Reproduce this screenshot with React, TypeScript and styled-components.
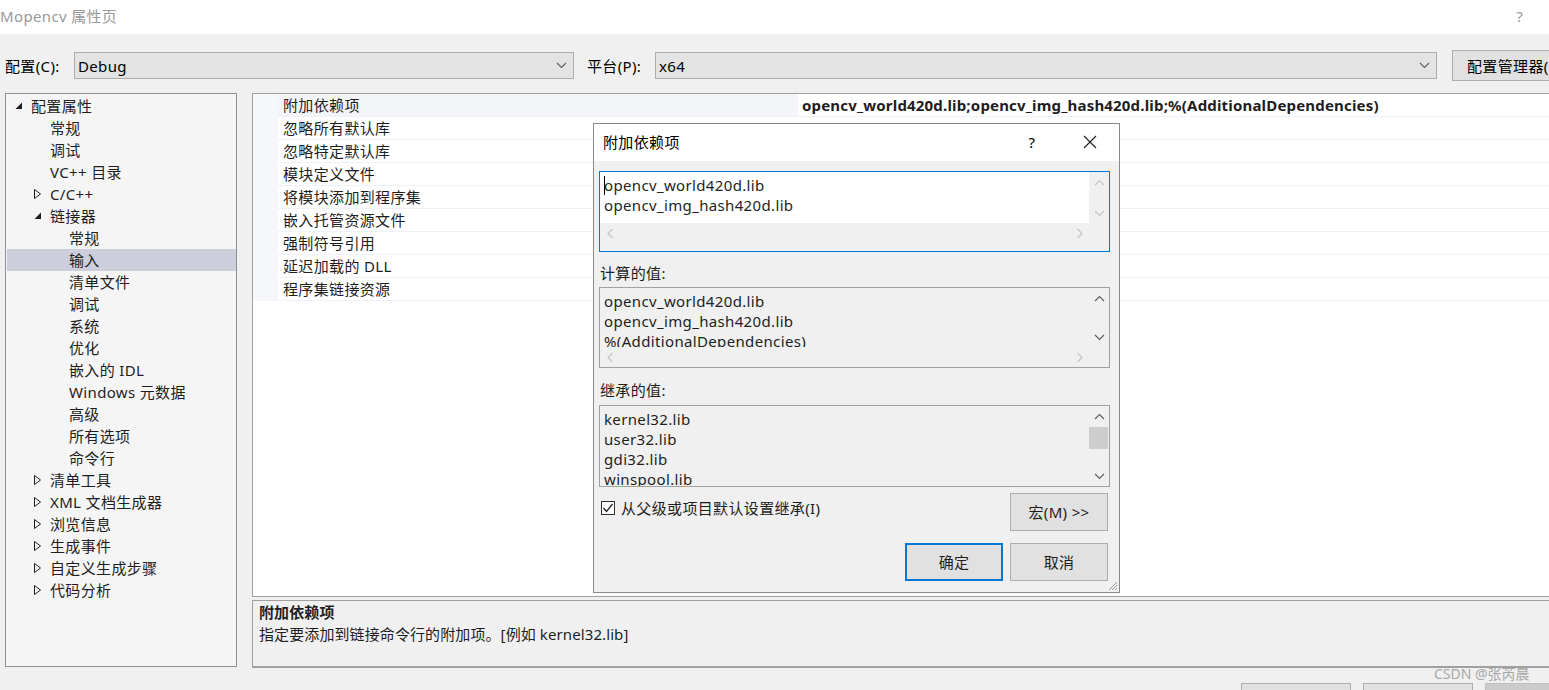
import React from "react";
import styled, { createGlobalStyle } from "styled-components";

const FONT = `"Noto Sans", "Noto Sans CJK SC", sans-serif`;

const GlobalStyle = createGlobalStyle`
  html, body { margin: 0; padding: 0; background: #f0f0f0; }
  body { font-family: ${FONT}; font-size: 15px; color: #000; letter-spacing: 0.35px; }
  * { box-sizing: border-box; }
`;

const Page = styled.div`
  position: relative;
  width: 1549px;
  height: 690px;
  overflow: hidden;
  background: #f0f0f0;
  display: flex;
  flex-direction: column;
`;

const TitleBar = styled.div`
  height: 34px;
  flex: none;
  background: #fff;
  display: flex;
  align-items: center;
  justify-content: space-between;
  padding: 0 26px 2px 0;
  color: #999;
  line-height: 20px;
`;

const Toolbar = styled.div`
  height: 59px;
  flex: none;
  display: flex;
  align-items: center;
  padding: 4px 0 0 5px;
  line-height: 20px;
`;

const ToolLabel = styled.span<{ $w: number }>`
  width: ${(p) => p.$w}px;
  flex: none;
  white-space: nowrap;
`;

const Combo = styled.div<{ $w: number }>`
  height: 27px;
  width: ${(p) => p.$w}px;
  flex: none;
  background: #e3e3e3;
  border: 1px solid #adadad;
  display: flex;
  align-items: center;
  justify-content: space-between;
  padding: 0 6px 0 3px;
`;

const ToolButton = styled.div`
  height: 31px;
  width: 130px;
  flex: none;
  margin-left: 15px;
  background: #e1e1e1;
  border: 1px solid #adadad;
  display: flex;
  align-items: center;
  padding-left: 14px;
  white-space: nowrap;
`;

const Main = styled.div`
  height: 575px;
  flex: none;
  display: flex;
  gap: 15px;
  padding-left: 5px;
`;

const Tree = styled.div`
  width: 232px;
  height: 574px;
  flex: none;
  background: #f5f5f5;
  border: 1px solid #8e8f96;
  padding: 1px 0 0 1px;
  line-height: 22px;
`;

const TreeRow = styled.div<{ $level: number; $selected?: boolean }>`
  height: 22px;
  display: flex;
  align-items: center;
  padding-left: ${(p) => 8 + p.$level * 19}px;
  background: ${(p) => (p.$selected ? "#cccedb" : "transparent")};
  color: #1e1e1e;
  white-space: nowrap;
`;

const Expander = styled.span`
  width: 16px;
  flex: none;
  display: flex;
  align-items: center;
`;

const RightCol = styled.div`
  flex: 1;
  display: flex;
  flex-direction: column;
  gap: 3px;
  margin-right: -3px;
`;

const Grid = styled.div`
  height: 504px;
  flex: none;
  background: #fff;
  border: 1px solid #a0a0a0;
  overflow: hidden;
`;

const GridRow = styled.div`
  height: 23px;
  display: grid;
  grid-template-columns: 25px 520px 1fr;
  line-height: 22px;
`;

const Gutter = styled.div`
  background: #f5f7fa;
`;

const NameCell = styled.div<{ $selected?: boolean }>`
  padding-left: 5px;
  border-bottom: 1px solid #eef1f6;
  background: ${(p) => (p.$selected ? "#f3f5f9" : "#fff")};
  color: #1e1e1e;
  white-space: nowrap;
`;

const ValueCell = styled.div`
  padding-left: 4px;
  border-bottom: 1px solid #eef1f6;
  font-weight: 700;
  letter-spacing: 0.18px;
  white-space: nowrap;
  color: #1e1e1e;
`;

const Description = styled.div`
  height: 68px;
  flex: none;
  background: #f0f0f0;
  border-top: 1px solid #a0a0a0;
  border-left: 1px solid #a0a0a0;
  border-bottom: 2px solid #a0a0a0;
  padding-left: 6px;
  line-height: 22px;
  letter-spacing: 0.1px;
  color: #1e1e1e;
`;

const DescTitle = styled.div`
  font-weight: 700;
`;

const Footer = styled.div`
  display: flex;
  justify-content: flex-end;
  gap: 12px;
  padding-top: 15px;
  margin-right: -46px;
`;

const FooterButton = styled.div<{ $disabled?: boolean }>`
  width: 110px;
  height: 30px;
  background: ${(p) => (p.$disabled ? "#cccccc" : "#e1e1e1")};
  border: 1px solid ${(p) => (p.$disabled ? "#bfbfbf" : "#adadad")};
`;

const Watermark = styled.div`
  position: absolute;
  left: 1434px;
  top: 664px;
  font-size: 14px;
  line-height: 20px;
  letter-spacing: 0;
  color: #a8a8a8;
  white-space: nowrap;
`;

/* ---------- dialog ---------- */

const Dialog = styled.div`
  position: absolute;
  left: 593px;
  top: 123px;
  width: 527px;
  height: 470px;
  background: #f0f0f0;
  border: 1px solid #8a8a8a;
  display: flex;
  flex-direction: column;
  line-height: 20px;
`;

const DialogTitle = styled.div`
  height: 37px;
  flex: none;
  background: #fff;
  display: flex;
  align-items: center;
  padding: 0 22px 1px 9px;
`;

const DialogTitleText = styled.span`
  flex: 1;
`;

const HelpGlyph = styled.span`
  width: 20px;
  text-align: center;
  margin-right: 41px;
`;

const DialogBody = styled.div`
  position: relative;
  flex: 1;
  display: flex;
  flex-direction: column;
  padding: 10px 9px 0 5px;
`;

const TextBox = styled.div<{ $focused?: boolean; $height: number }>`
  height: ${(p) => p.$height}px;
  flex: none;
  border: 1px solid ${(p) => (p.$focused ? "#0078d7" : "#a0a0a0")};
  background: #f0f0f0;
  display: grid;
  grid-template-columns: 1fr 20px;
  overflow: hidden;
`;

const TextArea = styled.div<{ $editable?: boolean }>`
  position: relative;
  background: ${(p) => (p.$editable ? "#fff" : "#f0f0f0")};
  padding: 3px 0 0 4px;
  overflow: hidden;
  white-space: pre;
  color: #1e1e1e;
`;

const Caret = styled.span`
  position: absolute;
  left: 4px;
  top: 4px;
  width: 1px;
  height: 19px;
  background: #000;
`;

const VScroll = styled.div`
  display: flex;
  flex-direction: column;
  align-items: center;
  background: #f0f0f0;
`;

const ArrowBtn = styled.div`
  width: 20px;
  height: 20px;
  flex: none;
  display: flex;
  align-items: center;
  justify-content: center;
`;

const VTrack = styled.div`
  flex: 1;
  width: 100%;
  padding: 1px 1px 0 0;
`;

const Thumb = styled.div`
  width: 19px;
  height: 22px;
  background: #cdcdcd;
`;

const HScroll = styled.div`
  grid-column: 1 / 3;
  height: 20px;
  display: flex;
  justify-content: space-between;
  padding-right: 20px;
  background: #f0f0f0;
`;

const FieldLabel = styled.div<{ $top: number; $bottom: number }>`
  margin: ${(p) => p.$top}px 0 ${(p) => p.$bottom}px 1px;
  color: #1e1e1e;
`;

const OptionRow = styled.div`
  display: flex;
  justify-content: space-between;
  align-items: flex-start;
  margin-top: 6px;
  padding-right: 2px;
`;

const CheckLabel = styled.label`
  display: flex;
  align-items: center;
  gap: 6px;
  padding: 5px 0 0 2px;
  color: #1e1e1e;
`;

const CheckBox = styled.span`
  width: 14px;
  height: 14px;
  border: 1px solid #333;
  background: #fff;
  display: flex;
  align-items: center;
  justify-content: center;
`;

const DlgButton = styled.div<{ $default?: boolean }>`
  width: 98px;
  height: 38px;
  flex: none;
  background: #e1e1e1;
  border: ${(p) => (p.$default ? "2px solid #0078d7" : "1px solid #adadad")};
  display: flex;
  align-items: center;
  justify-content: center;
  color: #1e1e1e;
`;

const ButtonRow = styled.div`
  display: flex;
  justify-content: flex-end;
  gap: 7px;
  margin-top: 12px;
  padding-right: 2px;
`;

const Grip = styled.svg`
  position: absolute;
  right: 1px;
  bottom: 1px;
`;

/* ---------- icons ---------- */

const Chevron = ({ dir, color = "#606060" }: { dir: "up" | "down" | "left" | "right"; color?: string }) => {
  const paths: Record<string, string> = {
    down: "M1 3 L5.5 7.5 L10 3",
    up: "M1 8 L5.5 3.5 L10 8",
    left: "M7.5 1 L3 5.5 L7.5 10",
    right: "M3.5 1 L8 5.5 L3.5 10",
  };
  return (
    <svg width="11" height="11" viewBox="0 0 11 11">
      <path d={paths[dir]} fill="none" stroke={color} strokeWidth="1.2" />
    </svg>
  );
};

const OpenTri = () => (
  <svg width="8" height="8" viewBox="0 0 8 8">
    <polygon points="7,0.5 7,7 0.5,7" fill="#1e1e1e" />
  </svg>
);

const ClosedTri = () => (
  <svg width="8" height="10" viewBox="0 0 8 10">
    <polygon points="0.5,0.5 6.5,5 0.5,9.5" fill="none" stroke="#1e1e1e" strokeWidth="1" />
  </svg>
);

const CloseIcon = () => (
  <svg width="14" height="14" viewBox="0 0 14 14">
    <path d="M1 1 L13 13 M13 1 L1 13" stroke="#1e1e1e" strokeWidth="1.1" />
  </svg>
);

const CheckMark = () => (
  <svg width="12" height="12" viewBox="0 0 12 12">
    <path d="M1.5 6 L4.5 9.5 L10.5 2" fill="none" stroke="#1e1e1e" strokeWidth="1.3" />
  </svg>
);

/* ---------- data ---------- */

type Node = { label: string; level: number; exp?: "open" | "closed"; selected?: boolean };

const treeNodes: Node[] = [
  { label: "配置属性", level: 0, exp: "open" },
  { label: "常规", level: 1 },
  { label: "调试", level: 1 },
  { label: "VC++ 目录", level: 1 },
  { label: "C/C++", level: 1, exp: "closed" },
  { label: "链接器", level: 1, exp: "open" },
  { label: "常规", level: 2 },
  { label: "输入", level: 2, selected: true },
  { label: "清单文件", level: 2 },
  { label: "调试", level: 2 },
  { label: "系统", level: 2 },
  { label: "优化", level: 2 },
  { label: "嵌入的 IDL", level: 2 },
  { label: "Windows 元数据", level: 2 },
  { label: "高级", level: 2 },
  { label: "所有选项", level: 2 },
  { label: "命令行", level: 2 },
  { label: "清单工具", level: 1, exp: "closed" },
  { label: "XML 文档生成器", level: 1, exp: "closed" },
  { label: "浏览信息", level: 1, exp: "closed" },
  { label: "生成事件", level: 1, exp: "closed" },
  { label: "自定义生成步骤", level: 1, exp: "closed" },
  { label: "代码分析", level: 1, exp: "closed" },
];

const gridRows: { name: string; value?: string }[] = [
  { name: "附加依赖项", value: "opencv_world420d.lib;opencv_img_hash420d.lib;%(AdditionalDependencies)" },
  { name: "忽略所有默认库" },
  { name: "忽略特定默认库" },
  { name: "模块定义文件" },
  { name: "将模块添加到程序集" },
  { name: "嵌入托管资源文件" },
  { name: "强制符号引用" },
  { name: "延迟加载的 DLL" },
  { name: "程序集链接资源" },
];

export default function App() {
  return (
    <>
      <GlobalStyle />
      <Page>
        <TitleBar>
          <span>Mopencv 属性页</span>
          <span>?</span>
        </TitleBar>

        <Toolbar>
          <ToolLabel $w={69}>配置(C):</ToolLabel>
          <Combo $w={500}>
            <span>Debug</span>
            <Chevron dir="down" />
          </Combo>
          <ToolLabel $w={13} />
          <ToolLabel $w={68}>平台(P):</ToolLabel>
          <Combo $w={782}>
            <span>x64</span>
            <Chevron dir="down" />
          </Combo>
          <ToolButton>配置管理器(O)...</ToolButton>
        </Toolbar>

        <Main>
          <Tree>
            {treeNodes.map((n, i) => (
              <TreeRow key={i} $level={n.level} $selected={n.selected}>
                <Expander>
                  {n.exp === "open" && <OpenTri />}
                  {n.exp === "closed" && <ClosedTri />}
                </Expander>
                {n.label}
              </TreeRow>
            ))}
          </Tree>

          <RightCol>
            <Grid>
              {gridRows.map((r, i) => (
                <GridRow key={i}>
                  <Gutter />
                  <NameCell $selected={i === 0}>{r.name}</NameCell>
                  <ValueCell>{r.value ?? ""}</ValueCell>
                </GridRow>
              ))}
            </Grid>
            <Description>
              <DescTitle>附加依赖项</DescTitle>
              <div>指定要添加到链接命令行的附加项。[例如 kernel32.lib]</div>
            </Description>
          </RightCol>
        </Main>

        <Footer>
          <FooterButton />
          <FooterButton />
          <FooterButton $disabled />
        </Footer>

        <Watermark>CSDN @张芮晨</Watermark>

        <Dialog>
          <DialogTitle>
            <DialogTitleText>附加依赖项</DialogTitleText>
            <HelpGlyph>?</HelpGlyph>
            <CloseIcon />
          </DialogTitle>
          <DialogBody>
            <TextBox $focused $height={81}>
              <TextArea $editable>
                <Caret />
                {"opencv_world420d.lib\nopencv_img_hash420d.lib"}
              </TextArea>
              <VScroll>
                <ArrowBtn><Chevron dir="up" color="#c4c4c4" /></ArrowBtn>
                <VTrack />
                <ArrowBtn><Chevron dir="down" color="#c4c4c4" /></ArrowBtn>
              </VScroll>
              <HScroll>
                <ArrowBtn><Chevron dir="left" color="#c4c4c4" /></ArrowBtn>
                <ArrowBtn><Chevron dir="right" color="#c4c4c4" /></ArrowBtn>
              </HScroll>
            </TextBox>

            <FieldLabel $top={11} $bottom={4}>计算的值:</FieldLabel>
            <TextBox $height={81}>
              <TextArea>
                {"opencv_world420d.lib\nopencv_img_hash420d.lib\n%(AdditionalDependencies)"}
              </TextArea>
              <VScroll>
                <ArrowBtn><Chevron dir="up" /></ArrowBtn>
                <VTrack />
                <ArrowBtn><Chevron dir="down" /></ArrowBtn>
              </VScroll>
              <HScroll>
                <ArrowBtn><Chevron dir="left" color="#c4c4c4" /></ArrowBtn>
                <ArrowBtn><Chevron dir="right" color="#c4c4c4" /></ArrowBtn>
              </HScroll>
            </TextBox>

            <FieldLabel $top={12} $bottom={5}>继承的值:</FieldLabel>
            <TextBox $height={82}>
              <TextArea>
                {"kernel32.lib\nuser32.lib\ngdi32.lib\nwinspool.lib"}
              </TextArea>
              <VScroll>
                <ArrowBtn><Chevron dir="up" /></ArrowBtn>
                <VTrack><Thumb /></VTrack>
                <ArrowBtn><Chevron dir="down" /></ArrowBtn>
              </VScroll>
            </TextBox>

            <OptionRow>
              <CheckLabel>
                <CheckBox><CheckMark /></CheckBox>
                从父级或项目默认设置继承(I)
              </CheckLabel>
              <DlgButton>宏(M) &gt;&gt;</DlgButton>
            </OptionRow>

            <ButtonRow>
              <DlgButton $default>确定</DlgButton>
              <DlgButton>取消</DlgButton>
            </ButtonRow>

            <Grip width="10" height="10" viewBox="0 0 10 10">
              <path d="M9 1 L1 9 M9 4 L4 9 M9 7 L7 9" stroke="#9a9a9a" strokeWidth="1" />
            </Grip>
          </DialogBody>
        </Dialog>
      </Page>
    </>
  );
}
